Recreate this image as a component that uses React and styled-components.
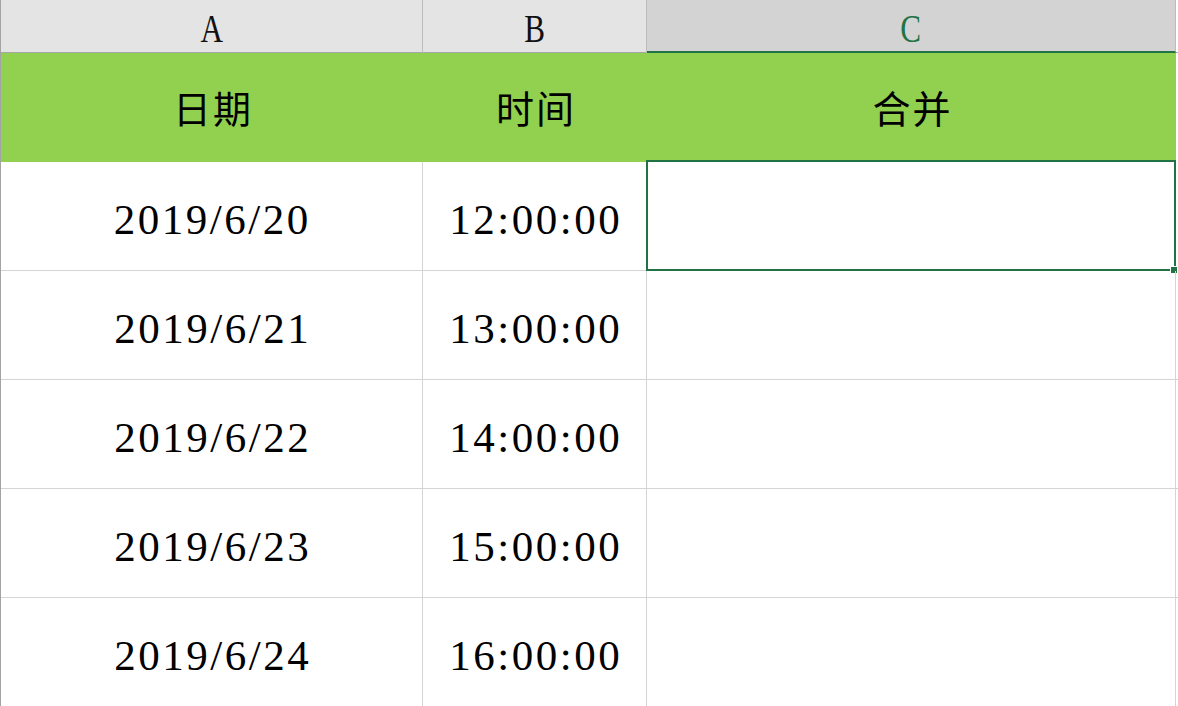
import React from 'react';
import styled, { createGlobalStyle } from 'styled-components';

const GlobalStyle = createGlobalStyle`
  html, body {
    margin: 0;
    padding: 0;
    background: #ffffff;
    overflow: hidden;
  }
`;

const columns = [
  { key: 'A', width: 422 },
  { key: 'B', width: 224 },
  { key: 'C', width: 529, selected: true },
];

const rows = [
  { date: '2019/6/20', time: '12:00:00' },
  { date: '2019/6/21', time: '13:00:00' },
  { date: '2019/6/22', time: '14:00:00' },
  { date: '2019/6/23', time: '15:00:00' },
  { date: '2019/6/24', time: '16:00:00' },
];

const green = '#217346';

const App = () => {
  const template = `${columns.map((c) => c.width + 'px').join(' ')} 1fr`;

  return (
    <>
      <GlobalStyle />
      <Sheet>
        <HeaderBar $template={template}>
          {columns.map((c) => (
            <ColHead key={c.key} $selected={c.selected}>
              <ColLetter $selected={c.selected}>{c.key}</ColLetter>
            </ColHead>
          ))}
          <ColTail />
        </HeaderBar>

        <Row $template={template} $height={109}>
          <TitleCell>日期</TitleCell>
          <TitleCell>时间</TitleCell>
          <TitleCell>合并</TitleCell>
          <TailCell />
        </Row>

        {rows.map((r, idx) => (
          <Row key={r.date} $template={template} $height={109}>
            <Cell $rowActive={idx === 0}>{r.date}</Cell>
            <Cell>{r.time}</Cell>
            <Cell>
              {idx === 0 && (
                <Selection>
                  <Handle />
                </Selection>
              )}
            </Cell>
            <TailCell $grid />
          </Row>
        ))}
      </Sheet>
    </>
  );
};

const Sheet = styled.div`
  width: 1178px;
  height: 706px;
  overflow: hidden;
  border-left: 1px solid #a3a3a3;
  box-sizing: border-box;
`;

const HeaderBar = styled.div`
  display: grid;
  grid-template-columns: ${(p) => p.$template};
  height: 53px;
  background: #e4e4e4;
`;

const ColHead = styled.div`
  display: flex;
  align-items: center;
  justify-content: center;
  box-sizing: border-box;
  background: ${(p) => (p.$selected ? '#d3d3d3' : '#e4e4e4')};
  border-right: 1px solid #bcbcbc;
  border-bottom: ${(p) => (p.$selected ? `2px solid ${green}` : '1px solid #a6a6a6')};
`;

const ColTail = styled.div`
  background: #ffffff;
  border-bottom: 1px solid #a6a6a6;
`;

const ColLetter = styled.span`
  font-family: 'Liberation Serif', serif;
  font-size: 41px;
  line-height: 1;
  color: ${(p) => (p.$selected ? green : '#111111')};
  display: inline-block;
  transform: scaleX(0.76);
  padding-top: 5px;
`;

const Row = styled.div`
  display: grid;
  grid-template-columns: ${(p) => p.$template};
  height: ${(p) => p.$height}px;
`;

const TitleCell = styled.div`
  display: flex;
  align-items: center;
  justify-content: center;
  background: #92d050;
  font-family: 'Noto Sans CJK SC', sans-serif;
  font-size: 38px;
  letter-spacing: 2px;
  text-indent: 2px;
  color: #000000;
  padding-bottom: 2px;
  box-sizing: border-box;
`;

const TailCell = styled.div`
  background: #ffffff;
  border-bottom: ${(p) => (p.$grid ? '1px solid #d4d4d4' : 'none')};
`;

const Cell = styled.div`
  position: relative;
  display: flex;
  align-items: center;
  justify-content: center;
  box-sizing: border-box;
  padding-top: 6px;
  border-right: 1px solid #d4d4d4;
  border-bottom: 1px solid #d4d4d4;
  box-shadow: ${(p) => (p.$rowActive ? `inset 1px 0 0 ${green}` : 'none')};
  margin-left: ${(p) => (p.$rowActive ? '-1px' : '0')};
  font-family: 'Liberation Serif', serif;
  font-size: 43px;
  letter-spacing: 2.5px;
  text-indent: 2.5px;
  color: #000000;
`;

const Selection = styled.div`
  position: absolute;
  top: -2px;
  left: -1px;
  right: -1px;
  bottom: -1px;
  border: 2px solid ${green};
  pointer-events: none;
`;

const Handle = styled.div`
  position: absolute;
  right: -4px;
  bottom: -5px;
  width: 8px;
  height: 8px;
  box-sizing: border-box;
  background: ${green};
  border: 1px solid #ffffff;
`;

export default App;
